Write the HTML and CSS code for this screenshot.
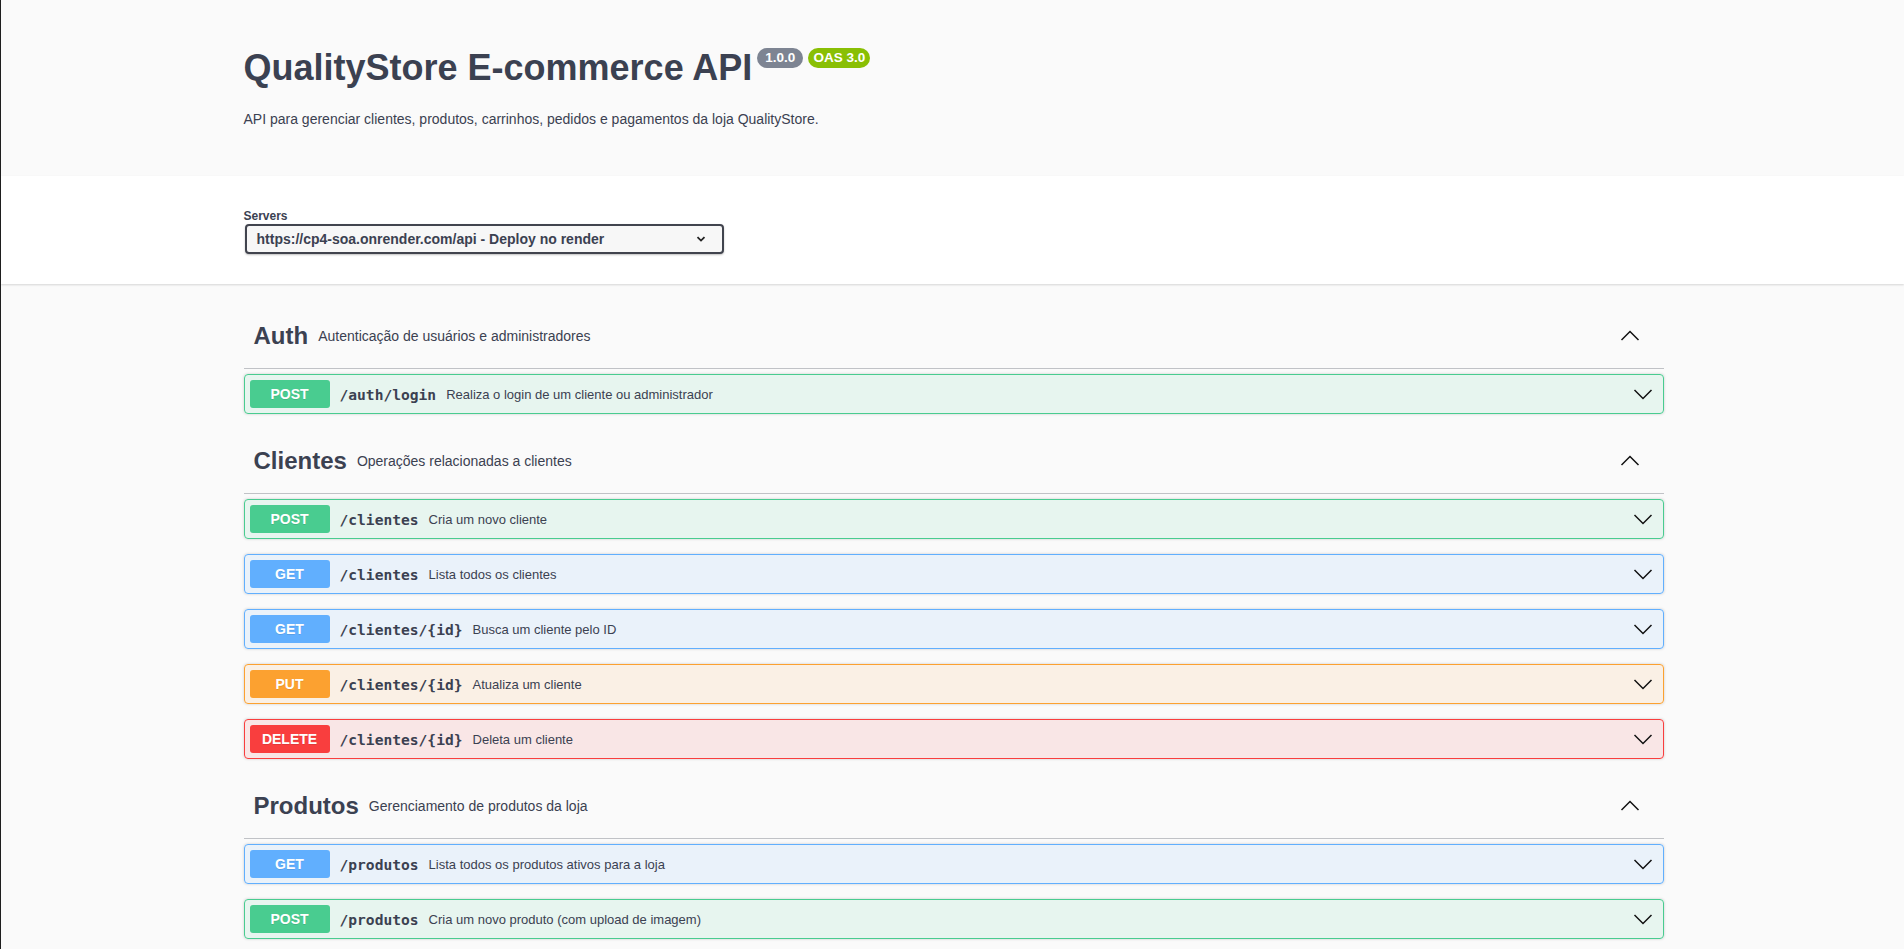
FILE: index.html
```html
<!DOCTYPE html>
<html lang="pt">
<head>
<meta charset="utf-8">
<title>QualityStore E-commerce API</title>
<link rel="stylesheet" href="styles.css">
</head>
<body>
<div class="info-band">
  <div class="wrapper">
    <div class="info">
      <h2 class="title">
        <span class="title-text">QualityStore E-commerce API</span>
        <span class="badge badge-version">1.0.0</span>
        <span class="badge badge-oas">OAS 3.0</span>
      </h2>
      <p class="info-desc">API para gerenciar clientes, produtos, carrinhos, pedidos e pagamentos da loja QualityStore.</p>
    </div>
  </div>
</div>

<div class="scheme-container">
  <div class="wrapper">
    <div class="servers">
      <span class="servers-label">Servers</span>
      <div class="select">
        <span class="select-text">https://cp4-soa.onrender.com/api - Deploy no render</span>
        <svg class="select-arrow" width="10" height="6" viewBox="0 0 10 6"><path d="M1.5 1.2 L5 4.6 L8.5 1.2" fill="none" stroke="#222" stroke-width="1.8"/></svg>
      </div>
    </div>
  </div>
</div>

<div class="wrapper ops">
  <section class="tag-section">
    <h3 class="tag">
      <span class="tag-name">Auth</span>
      <small class="tag-desc">Autenticação de usuários e administradores</small>
      <svg class="chev" width="20" height="20" viewBox="0 0 20 20"><path d="M1.5 14 L10 5.5 L18.5 14" fill="none" stroke="#111" stroke-width="1.5"/></svg>
    </h3>
    <div class="opblock post">
      <span class="method">POST</span>
      <span class="path">/auth/login</span>
      <span class="desc">Realiza o login de um cliente ou administrador</span>
      <svg class="chev" width="20" height="20" viewBox="0 0 20 20"><path d="M1.5 6 L10 14.5 L18.5 6" fill="none" stroke="#111" stroke-width="1.5"/></svg>
    </div>
  </section>

  <section class="tag-section">
    <h3 class="tag">
      <span class="tag-name">Clientes</span>
      <small class="tag-desc">Operações relacionadas a clientes</small>
      <svg class="chev" width="20" height="20" viewBox="0 0 20 20"><path d="M1.5 14 L10 5.5 L18.5 14" fill="none" stroke="#111" stroke-width="1.5"/></svg>
    </h3>
    <div class="opblock post">
      <span class="method">POST</span>
      <span class="path">/clientes</span>
      <span class="desc">Cria um novo cliente</span>
      <svg class="chev" width="20" height="20" viewBox="0 0 20 20"><path d="M1.5 6 L10 14.5 L18.5 6" fill="none" stroke="#111" stroke-width="1.5"/></svg>
    </div>
    <div class="opblock get">
      <span class="method">GET</span>
      <span class="path">/clientes</span>
      <span class="desc">Lista todos os clientes</span>
      <svg class="chev" width="20" height="20" viewBox="0 0 20 20"><path d="M1.5 6 L10 14.5 L18.5 6" fill="none" stroke="#111" stroke-width="1.5"/></svg>
    </div>
    <div class="opblock get">
      <span class="method">GET</span>
      <span class="path">/clientes/{id}</span>
      <span class="desc">Busca um cliente pelo ID</span>
      <svg class="chev" width="20" height="20" viewBox="0 0 20 20"><path d="M1.5 6 L10 14.5 L18.5 6" fill="none" stroke="#111" stroke-width="1.5"/></svg>
    </div>
    <div class="opblock put">
      <span class="method">PUT</span>
      <span class="path">/clientes/{id}</span>
      <span class="desc">Atualiza um cliente</span>
      <svg class="chev" width="20" height="20" viewBox="0 0 20 20"><path d="M1.5 6 L10 14.5 L18.5 6" fill="none" stroke="#111" stroke-width="1.5"/></svg>
    </div>
    <div class="opblock delete">
      <span class="method">DELETE</span>
      <span class="path">/clientes/{id}</span>
      <span class="desc">Deleta um cliente</span>
      <svg class="chev" width="20" height="20" viewBox="0 0 20 20"><path d="M1.5 6 L10 14.5 L18.5 6" fill="none" stroke="#111" stroke-width="1.5"/></svg>
    </div>
  </section>

  <section class="tag-section">
    <h3 class="tag">
      <span class="tag-name">Produtos</span>
      <small class="tag-desc">Gerenciamento de produtos da loja</small>
      <svg class="chev" width="20" height="20" viewBox="0 0 20 20"><path d="M1.5 14 L10 5.5 L18.5 14" fill="none" stroke="#111" stroke-width="1.5"/></svg>
    </h3>
    <div class="opblock get">
      <span class="method">GET</span>
      <span class="path">/produtos</span>
      <span class="desc">Lista todos os produtos ativos para a loja</span>
      <svg class="chev" width="20" height="20" viewBox="0 0 20 20"><path d="M1.5 6 L10 14.5 L18.5 6" fill="none" stroke="#111" stroke-width="1.5"/></svg>
    </div>
    <div class="opblock post">
      <span class="method">POST</span>
      <span class="path">/produtos</span>
      <span class="desc">Cria um novo produto (com upload de imagem)</span>
      <svg class="chev" width="20" height="20" viewBox="0 0 20 20"><path d="M1.5 6 L10 14.5 L18.5 6" fill="none" stroke="#111" stroke-width="1.5"/></svg>
    </div>
  </section>
</div>
</body>
</html>
```

FILE: styles.css
```css
* { box-sizing: border-box; }

html, body {
  margin: 0;
  padding: 0;
}

body {
  background: #fafafa;
  border-left: 1px solid #1e1e1e;
  font-family: "Liberation Sans", Arial, sans-serif;
  color: #3b4151;
}

.wrapper {
  max-width: 1460px;
  margin: 0 auto;
  padding: 0 19px 0 21px;
}

/* ---------- info header ---------- */
.info-band {
  background: #fafafa;
}

.info {
  padding: 47px 0 49px;
}

.title {
  display: flex;
  align-items: flex-start;
  margin: 0;
  font-size: 36px;
  font-weight: 700;
  line-height: 41px;
  color: #3b4151;
}

.badge {
  display: inline-block;
  margin: 1px 0 0 5px;
  padding: 0 8px;
  height: 20px;
  line-height: 20px;
  border-radius: 57px;
  font-size: 13.5px;
  font-weight: 700;
  color: #fff;
}

.badge-version { background: #7d8492; }
.badge-oas { background: #89bf04; margin-left: 5px; padding: 0 5px; }

.info-desc {
  margin: 23px 0 0;
  font-size: 14px;
  line-height: 16px;
}

/* ---------- servers ---------- */
.scheme-container {
  background: #fff;
  padding: 30px 0;
  box-shadow: 0 1px 2px 0 rgba(0, 0, 0, .15);
  margin-bottom: 20px;
}

.servers {
  display: flex;
  flex-direction: column;
  align-items: flex-start;
}

.servers-label {
  font-size: 12px;
  font-weight: 700;
  line-height: 18px;
  height: 18px;
  padding-top: 1px;
}

.select {
  display: flex;
  align-items: center;
  width: 479px;
  height: 30px;
  margin-left: 1px;
  padding: 0 16px 0 10px;
  border: 2px solid #41444e;
  border-radius: 4px;
  background: #f7f7f7;
  box-shadow: 0 1px 2px 0 rgba(0, 0, 0, .25);
}

.select-text {
  flex: 1;
  font-size: 14px;
  font-weight: 700;
  color: #3b4151;
}

.select-arrow { display: block; }

/* ---------- operations ---------- */
.ops {
  padding-bottom: 40px;
}

.tag {
  display: flex;
  align-items: center;
  min-height: 44px;
  box-sizing: content-box;
  margin: 0 0 5px;
  padding: 10px 24px 10px 10px;
  border-bottom: 1px solid rgba(59, 65, 81, .3);
  font-size: 24px;
  font-weight: 700;
  color: #3b4151;
}

.tag-desc {
  flex: 1;
  padding: 0 10px;
  font-size: 14px;
  font-weight: 400;
}

.chev {
  display: block;
  flex: none;
}

.opblock {
  display: flex;
  align-items: center;
  margin: 0 0 15px;
  padding: 5px 10px 5px 5px;
  border: 1px solid;
  border-radius: 4px;
  box-shadow: 0 0 3px rgba(0, 0, 0, .19);
}

.method {
  display: block;
  min-width: 80px;
  padding: 6px 0;
  border-radius: 3px;
  font-size: 14px;
  font-weight: 700;
  line-height: 16px;
  text-align: center;
  color: #fff;
  text-shadow: 0 1px 0 rgba(0, 0, 0, .1);
}

.path {
  padding: 0 10px;
  font-family: "DejaVu Sans Mono", monospace;
  font-size: 14.6px;
  font-weight: 700;
  color: #3b4151;
}

.desc {
  flex: 1;
  font-size: 13px;
  color: #3b4151;
}

.post { border-color: #49cc90; background: rgba(73, 204, 144, .1); }
.post .method { background: #49cc90; }

.get { border-color: #61affe; background: rgba(97, 175, 254, .1); }
.get .method { background: #61affe; }

.put { border-color: #fca130; background: rgba(252, 161, 48, .1); }
.put .method { background: #fca130; }

.delete { border-color: #f93e3e; background: rgba(249, 62, 62, .1); }
.delete .method { background: #f93e3e; }
```
